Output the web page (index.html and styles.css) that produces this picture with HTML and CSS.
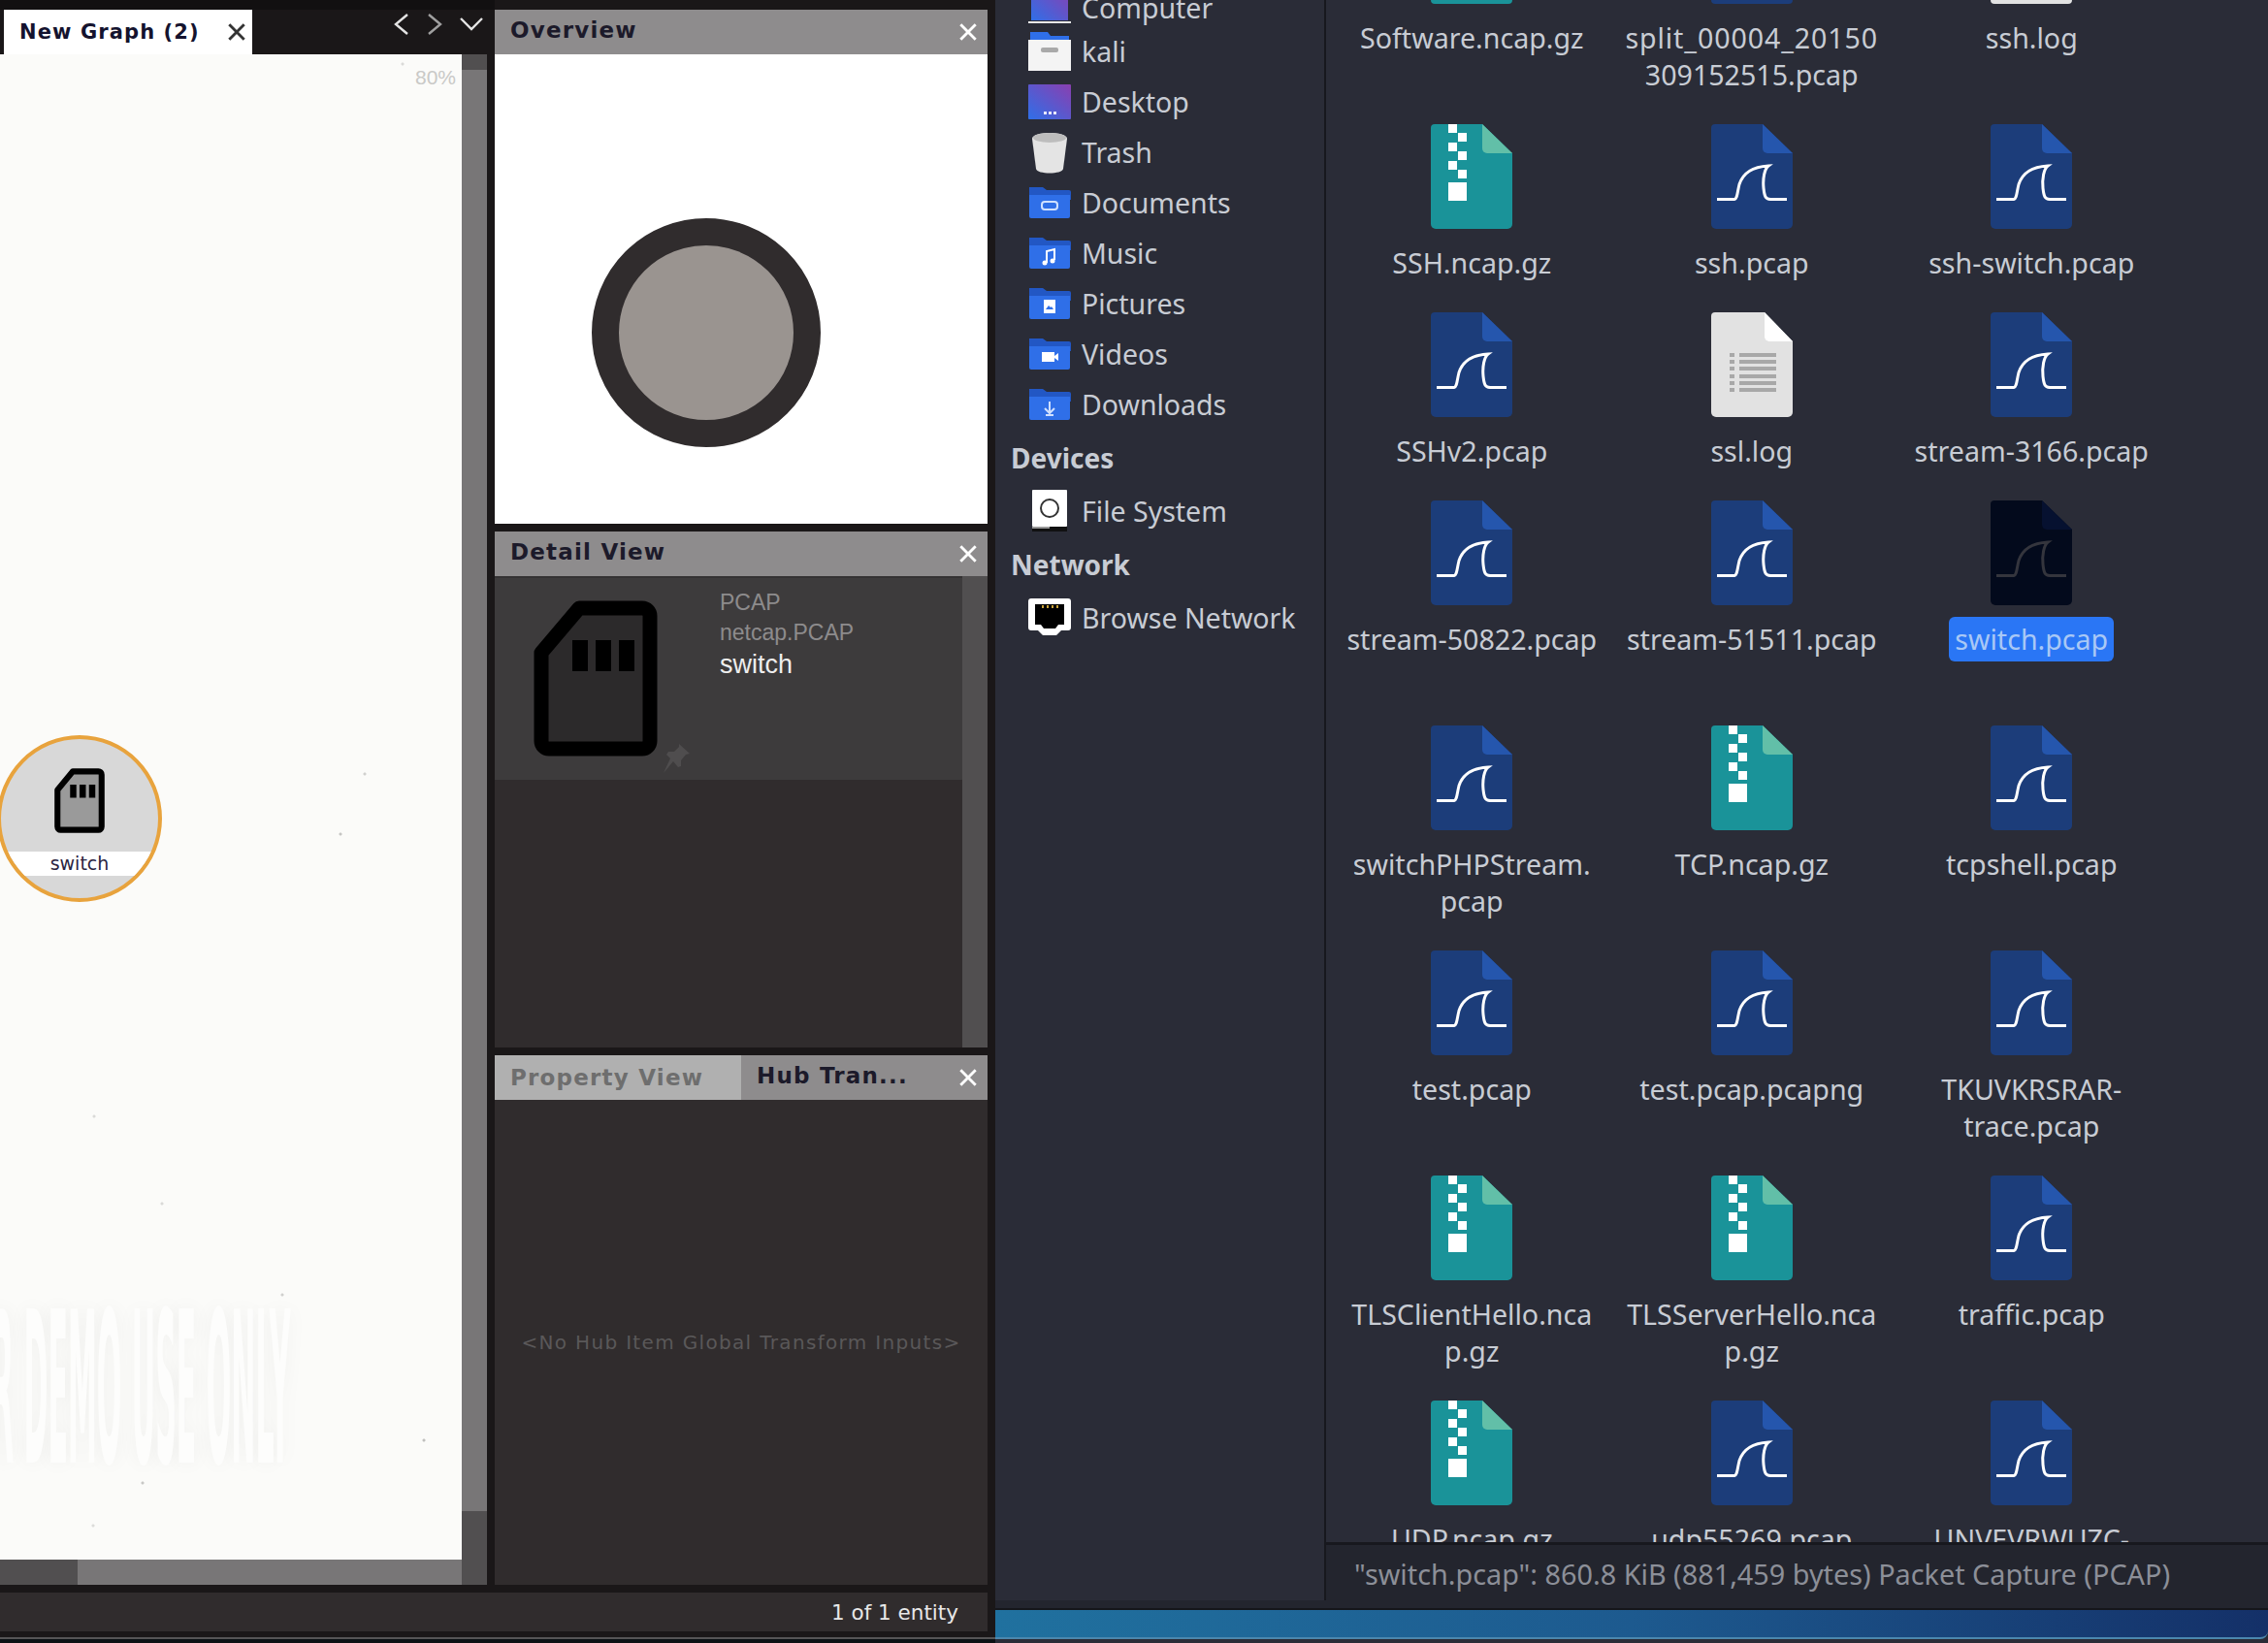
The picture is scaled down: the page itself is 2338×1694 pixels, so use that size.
FILE: index.html
```html
<!DOCTYPE html>
<html lang="en">
<head>
    <meta charset="UTF-8">
    <title>Maltego and Files</title>
    <link rel="stylesheet" href="styles.css">
</head>
<body>
    <svg class="defs" width="0" height="0">
        <symbol id="pcap" viewBox="0 0 84 108">
            <path fill="#1c3d7a" d="M4 0H53L84 30V103a5 5 0 0 1-5 5H5a5 5 0 0 1-5-5V4a4 4 0 0 1 4-4z"/>
            <path fill="#2556ad" d="M53 0L84 30H58a5 5 0 0 1-5-5z"/>
            <path fill="none" stroke="#fff" stroke-width="3" d="M6 77.5H24C27 77 27 70 29 62C33 50 42 44 59 43C55 46 53 56 54 66C55 75 56 77 61 77.5H78"/>
        </symbol>
        <symbol id="pcap-dim" viewBox="0 0 84 108">
            <path fill="#030a1c" d="M4 0H53L84 30V103a5 5 0 0 1-5 5H5a5 5 0 0 1-5-5V4a4 4 0 0 1 4-4z"/>
            <path fill="#061130" d="M53 0L84 30H58a5 5 0 0 1-5-5z"/>
            <path fill="none" stroke="#34353d" stroke-width="3" d="M6 77.5H24C27 77 27 70 29 62C33 50 42 44 59 43C55 46 53 56 54 66C55 75 56 77 61 77.5H78"/>
        </symbol>
        <symbol id="zip" viewBox="0 0 84 108">
            <path fill="#1a9399" d="M4 0H53L84 30V103a5 5 0 0 1-5 5H5a5 5 0 0 1-5-5V4a4 4 0 0 1 4-4z"/>
            <path fill="#62bfa8" d="M53 0L84 30H58a5 5 0 0 1-5-5z"/>
            <path fill="#fff" d="M18 0h9v9h-9zM28 9h9v9h-9zM18 19h9v9h-9zM28 28h9v9h-9zM18 38h9v9h-9zM28 47h9v9h-9zM18 60h19v19H18z"/>
        </symbol>
        <symbol id="text" viewBox="0 0 84 108">
            <path fill="#e2e2e2" d="M4 0H55L84 30V103a5 5 0 0 1-5 5H5a5 5 0 0 1-5-5V4a4 4 0 0 1 4-4z"/>
            <path fill="#fff" d="M55 0L84 30H60a5 5 0 0 1-5-5z"/>
            <path fill="#a8a8a8" d="M19 42h5v4h-5zM29 42h38v4H29zM19 49h5v4h-5zM29 49h38v4H29zM19 56h5v4h-5zM29 56h38v4H29zM19 64h5v4h-5zM29 64h38v4H29zM19 71h5v4h-5zM29 71h38v4H29zM19 78h5v4h-5zM29 78h38v4H29z"/>
        </symbol>
        <symbol id="card" viewBox="0 0 128 161" preserveAspectRatio="none">
            <path fill="currentColor" stroke="#000" stroke-width="15" stroke-linejoin="round" d="M47 8H112a8 8 0 0 1 8 8V145a8 8 0 0 1-8 8H16a8 8 0 0 1-8-8V54z"/>
            <path fill="#000" d="M40 41h16v32H40zM64 41h16v32H64zM88 41h16v32H88z"/>
        </symbol>
        <symbol id="folder" viewBox="0 0 44 32">
            <path fill="#2257c4" d="M1 0h14l4 3h23a2 2 0 0 1 2 2v8H1z"/>
            <path fill="#2f6fe8" d="M1 8h42v22a2 2 0 0 1-2 2H3a2 2 0 0 1-2-2z"/>
        </symbol>
        <linearGradient id="desk" x1="0" y1="1" x2="1" y2="0">
            <stop offset="0" stop-color="#2f6fe8"/>
            <stop offset="1" stop-color="#8a3fb0"/>
        </linearGradient>
    </svg>

    <div class="screen">
        <main class="graph-app">
            <section class="graph-col">
                <div class="tab-strip">
                    <div class="graph-tab">
                        <span>New Graph (2)</span>
                        <svg class="close dark" viewBox="0 0 20 20"><path d="M3 3L17 17M17 3L3 17"/></svg>
                    </div>
                    <div class="tab-nav">
                        <svg viewBox="0 0 16 24"><path d="M14 2L2 12L14 22"/></svg>
                        <svg class="dim" viewBox="0 0 16 24"><path d="M2 2L14 12L2 22"/></svg>
                        <svg class="wide" viewBox="0 0 24 14"><path d="M1 1L12 12L23 1"/></svg>
                    </div>
                </div>
                <div class="graph-body">
                    <div class="canvas">
                        <span class="zoom-level">80%</span>
                        <div class="node">
                            <svg class="node-icon"><use href="#card"/></svg>
                            <span class="node-label">switch</span>
                        </div>
                        <div class="watermark">FOR DEMO USE ONLY</div>
                    </div>
                    <div class="vbar"><div class="vthumb"></div></div>
                    <div class="hbar"><div class="hthumb"></div></div>
                    <div class="corner"></div>
                </div>
            </section>

            <aside class="side-col">
                <section class="panel panel-overview">
                    <header class="panel-head">
                        <span class="panel-title">Overview</span>
                        <svg class="close" viewBox="0 0 20 20"><path d="M3 3L17 17M17 3L3 17"/></svg>
                    </header>
                    <div class="overview-body"><div class="overview-dot"></div></div>
                </section>
                <section class="panel panel-detail">
                    <header class="panel-head">
                        <span class="panel-title">Detail View</span>
                        <svg class="close" viewBox="0 0 20 20"><path d="M3 3L17 17M17 3L3 17"/></svg>
                    </header>
                    <div class="detail-body">
                        <div class="detail-main">
                            <div class="detail-item">
                                <svg class="detail-icon"><use href="#card"/></svg>
                                <svg class="pin" viewBox="0 0 28 30"><path d="M17 0L28 10L24 11L19 17L19 23L16 24L11 18L1 30L8 15L4 11L6 8L12 8L17 3z"/></svg>
                                <div class="detail-text">
                                    <div class="detail-type">PCAP</div>
                                    <div class="detail-type">netcap.PCAP</div>
                                    <div class="detail-name">switch</div>
                                </div>
                            </div>
                        </div>
                        <div class="detail-bar"></div>
                    </div>
                </section>
                <section class="panel panel-hub">
                    <header class="panel-head">
                        <span class="panel-tab-off">Property View</span>
                        <span class="panel-tab-on">Hub Tran...</span>
                        <svg class="close" viewBox="0 0 20 20"><path d="M3 3L17 17M17 3L3 17"/></svg>
                    </header>
                    <div class="hub-body">&lt;No Hub Item Global Transform Inputs&gt;</div>
                </section>
            </aside>

            <footer class="graph-status">1 of 1 entity</footer>
            <div class="graph-bottom"></div>
        </main>

        <section class="files">
            <div class="files-top">
                <nav class="places">
                    <div class="place place-cut">
                        <svg class="place-icon" viewBox="0 0 44 40"><rect x="3" width="38" height="36" fill="url(#desk)"/><rect y="37" width="44" height="2" fill="#e8e8e8"/></svg>
                        <span>Computer</span>
                    </div>
                    <div class="place">
                        <svg class="place-icon" viewBox="0 0 44 40"><path fill="#2f6fe8" d="M2 0h18l3 4h19v8H2z"/><path fill="#f4f4f4" d="M0 8h44v32H0z"/><rect x="13" y="16" width="18" height="5" rx="2" fill="#a9a9a9"/></svg>
                        <span>kali</span>
                    </div>
                    <div class="place">
                        <svg class="place-icon" viewBox="0 0 44 36"><rect width="44" height="36" rx="1" fill="url(#desk)"/><path fill="#e8e8ff" d="M16 28h3v3h-3zM21 28h3v3h-3zM26 28h3v3h-3z"/></svg>
                        <span>Desktop</span>
                    </div>
                    <div class="place">
                        <svg class="place-icon" viewBox="0 0 44 44"><path fill="#e4e4e4" d="M4 8C4 0 40 0 40 8L36 39C35 45 9 45 8 39z"/><ellipse cx="22" cy="7" rx="17" ry="5" fill="#bdbdbd"/></svg>
                        <span>Trash</span>
                    </div>
                    <div class="place">
                        <svg class="place-icon folder-icon" viewBox="0 0 44 32"><use href="#folder" width="44" height="32"/><rect x="14" y="15" width="16" height="8" rx="3" fill="none" stroke="#cfe0ff" stroke-width="2"/></svg>
                        <span>Documents</span>
                    </div>
                    <div class="place">
                        <svg class="place-icon folder-icon" viewBox="0 0 44 32"><use href="#folder" width="44" height="32"/><path fill="none" stroke="#fff" stroke-width="2" d="M19 26V14l8-2v11"/><circle cx="17" cy="26" r="2.5" fill="#fff"/><circle cx="25" cy="24" r="2.5" fill="#fff"/></svg>
                        <span>Music</span>
                    </div>
                    <div class="place">
                        <svg class="place-icon folder-icon" viewBox="0 0 44 32"><use href="#folder" width="44" height="32"/><rect x="16" y="12" width="12" height="14" fill="#fff"/><path fill="#2f6fe8" d="M18 22l3-4 2 2 1-1 2 3z"/></svg>
                        <span>Pictures</span>
                    </div>
                    <div class="place">
                        <svg class="place-icon folder-icon" viewBox="0 0 44 32"><use href="#folder" width="44" height="32"/><rect x="14" y="14" width="13" height="10" fill="#fff"/><path fill="#fff" d="M27 18l4-3v8l-4-3z"/></svg>
                        <span>Videos</span>
                    </div>
                    <div class="place">
                        <svg class="place-icon folder-icon" viewBox="0 0 44 32"><use href="#folder" width="44" height="32"/><path fill="none" stroke="#cfe0ff" stroke-width="2" d="M22 13v11M17 20l5 5 5-5M18 27h8"/></svg>
                        <span>Downloads</span>
                    </div>
                    <div class="place-head">Devices</div>
                    <div class="place">
                        <svg class="place-icon" viewBox="0 0 44 44"><rect x="4" width="36" height="38" rx="1" fill="#fff"/><rect x="4" y="38" width="36" height="5" fill="#111"/><rect x="4" y="38" width="18" height="2" fill="#999"/><circle cx="22" cy="19" r="9" fill="none" stroke="#333" stroke-width="2"/></svg>
                        <span>File System</span>
                    </div>
                    <div class="place-head">Network</div>
                    <div class="place">
                        <svg class="place-icon" viewBox="0 0 44 40"><path fill="#fff" d="M3 0H41a3 3 0 0 1 3 3V30a3 3 0 0 1-3 3H34l-4 4a2 2 0 0 1-2 1H16a2 2 0 0 1-2-1l-4-4H3a3 3 0 0 1-3-3V3a3 3 0 0 1 3-3z"/><path fill="#000" d="M7 6H37V27H31L28 31H16L13 27H7z"/><path fill="#c9a23a" d="M14 7h2v3h-2zM19 7h2v3h-2zM24 7h2v3h-2zM29 7h2v3h-2z"/></svg>
                        <span>Browse Network</span>
                    </div>
                </nav>
                <div class="browser">
                    <div class="file-grid">
                        <div class="file file-cut"><span class="stub stub-zip"></span><span class="file-name">Software.ncap.gz</span></div>
                        <div class="file file-cut"><span class="stub stub-pcap"></span><span class="file-name"><span class="digits">split_00004_20150</span><br>309152515.pcap</span></div>
                        <div class="file file-cut"><span class="stub stub-text"></span><span class="file-name">ssh.log</span></div>

                        <div class="file"><svg class="file-icon"><use href="#zip"/></svg><span class="file-name">SSH.ncap.gz</span></div>
                        <div class="file"><svg class="file-icon"><use href="#pcap"/></svg><span class="file-name">ssh.pcap</span></div>
                        <div class="file"><svg class="file-icon"><use href="#pcap"/></svg><span class="file-name">ssh-switch.pcap</span></div>

                        <div class="file"><svg class="file-icon"><use href="#pcap"/></svg><span class="file-name">SSHv2.pcap</span></div>
                        <div class="file"><svg class="file-icon"><use href="#text"/></svg><span class="file-name">ssl.log</span></div>
                        <div class="file"><svg class="file-icon"><use href="#pcap"/></svg><span class="file-name">stream-3166.pcap</span></div>

                        <div class="file file-wrap"><svg class="file-icon"><use href="#pcap"/></svg><span class="file-name">stream-50822.pcap</span></div>
                        <div class="file file-wrap"><svg class="file-icon"><use href="#pcap"/></svg><span class="file-name">stream-51511.pcap</span></div>
                        <div class="file file-wrap"><svg class="file-icon"><use href="#pcap-dim"/></svg><span class="file-name selected">switch.pcap</span></div>

                        <div class="file file-wrap"><svg class="file-icon"><use href="#pcap"/></svg><span class="file-name">switchPHPStream.<br>pcap</span></div>
                        <div class="file file-wrap"><svg class="file-icon"><use href="#zip"/></svg><span class="file-name">TCP.ncap.gz</span></div>
                        <div class="file file-wrap"><svg class="file-icon"><use href="#pcap"/></svg><span class="file-name">tcpshell.pcap</span></div>

                        <div class="file file-wrap"><svg class="file-icon"><use href="#pcap"/></svg><span class="file-name">test.pcap</span></div>
                        <div class="file file-wrap"><svg class="file-icon"><use href="#pcap"/></svg><span class="file-name">test.pcap.pcapng</span></div>
                        <div class="file file-wrap"><svg class="file-icon"><use href="#pcap"/></svg><span class="file-name">TKUVKRSRAR-<br>trace.pcap</span></div>

                        <div class="file file-wrap"><svg class="file-icon"><use href="#zip"/></svg><span class="file-name">TLSClientHello.nca<br>p.gz</span></div>
                        <div class="file file-wrap"><svg class="file-icon"><use href="#zip"/></svg><span class="file-name">TLSServerHello.nca<br>p.gz</span></div>
                        <div class="file file-wrap"><svg class="file-icon"><use href="#pcap"/></svg><span class="file-name">traffic.pcap</span></div>

                        <div class="file"><svg class="file-icon"><use href="#zip"/></svg><span class="file-name">UDP.ncap.gz</span></div>
                        <div class="file"><svg class="file-icon"><use href="#pcap"/></svg><span class="file-name">udp55269.pcap</span></div>
                        <div class="file"><svg class="file-icon"><use href="#pcap"/></svg><span class="file-name">UNVEVRWUZC-</span></div>
                    </div>
                </div>
            </div>
            <div class="files-status">
                <div class="places-end"></div>
                <div class="status-text">"switch.pcap": 860.8 KiB (881,459 bytes) Packet Capture (PCAP)</div>
            </div>
            <div class="taskbar"></div>
        </section>
    </div>
</body>
</html>
```

FILE: styles.css
```css
* {
    box-sizing: border-box;
}
html, body {
    margin: 0;
    height: 100%;
}
body {
    overflow: hidden;
    background: #0c1114;
    font-family: "DejaVu Sans", sans-serif;
}
.defs {
    position: absolute;
}
.screen {
    display: flex;
    width: 2338px;
    height: 1694px;
}

/* graph application */
.graph-app {
    display: grid;
    grid-template-columns: 510px 516px;
    grid-template-rows: 1642px 40px 6px 6px;
    width: 1026px;
    background: #1a1718;
}
.graph-col {
    display: flex;
    flex-direction: column;
    padding-bottom: 8px;
}
.tab-strip {
    display: flex;
    height: 56px;
    padding-top: 10px;
    background: linear-gradient(#121011 10px, #1a1718 10px);
}
.graph-tab {
    display: flex;
    align-items: center;
    justify-content: space-between;
    width: 256px;
    margin-left: 4px;
    padding: 0 5px 0 16px;
    background: #ffffff;
    color: #14132e;
    font-size: 21px;
    font-weight: bold;
    letter-spacing: 1.1px;
}
.close {
    width: 22px;
    height: 22px;
    fill: none;
    stroke: #ffffff;
    stroke-width: 2.6;
}
.close.dark {
    stroke: #333333;
}
.tab-nav {
    display: flex;
    align-items: center;
    gap: 18px;
    margin-left: auto;
    padding: 0 12px 16px 0;
}
.tab-nav svg {
    width: 16px;
    height: 24px;
    fill: none;
    stroke: #e4e4e4;
    stroke-width: 2.4;
}
.tab-nav svg.dim {
    stroke: #a0a0a0;
}
.tab-nav svg.wide {
    width: 24px;
    height: 14px;
}
.graph-body {
    flex: 1;
    display: grid;
    grid-template-columns: 476px 26px;
    grid-template-rows: 1552px 26px;
}
.canvas {
    position: relative;
    overflow: hidden;
    background-color: #fbfbf9;
    background-image:
        radial-gradient(circle at 351px 804px, #c5c5c3 1px, transparent 2px),
        radial-gradient(circle at 376px 742px, #d0d0ce 1px, transparent 2px),
        radial-gradient(circle at 97px 1095px, #dadad8 1px, transparent 2px),
        radial-gradient(circle at 167px 1185px, #dadad8 1px, transparent 2px),
        radial-gradient(circle at 291px 1279px, #d0d0ce 1px, transparent 2px),
        radial-gradient(circle at 437px 1429px, #c0c0be 1px, transparent 2px),
        radial-gradient(circle at 147px 1473px, #c8c8c6 1px, transparent 2px),
        radial-gradient(circle at 96px 1517px, #dcdcda 1px, transparent 2px),
        radial-gradient(circle at 415px 10px, #dadad8 1px, transparent 2px);
}
.zoom-level {
    position: absolute;
    top: 12px;
    right: 6px;
    color: #c9c9c7;
    font-family: "Liberation Sans", sans-serif;
    font-size: 21px;
}
.node {
    position: absolute;
    left: -3px;
    top: 702px;
    width: 170px;
    height: 172px;
    border: 4px solid #e8a33d;
    border-radius: 50%;
    overflow: hidden;
    background: #d8d8d8;
    text-align: center;
}
.node-icon {
    position: absolute;
    left: 55px;
    top: 30px;
    width: 52px;
    height: 67px;
    color: #9a9a9a;
}
.node-label {
    position: absolute;
    left: 0;
    right: 0;
    top: 116px;
    height: 25px;
    background: #ffffff;
    color: #2b2440;
    font-size: 19px;
    line-height: 25px;
}
.watermark {
    position: absolute;
    left: -55px;
    top: 1270px;
    color: #fdfdfc;
    font-size: 56px;
    font-weight: bold;
    line-height: 56px;
    white-space: nowrap;
    text-shadow: 0 0 14px rgba(0, 0, 0, 0.05);
    transform: scale(0.536, 3.87);
    transform-origin: left top;
}
.vbar {
    background: #514f50;
    padding-top: 16px;
    padding-bottom: 50px;
}
.vthumb {
    height: 100%;
    background: #787677;
}
.hbar {
    background: #514f50;
    padding-left: 80px;
}
.hthumb {
    height: 100%;
    background: #787677;
}
.corner {
    background: #514f50;
}

/* right hand panels */
.side-col {
    display: flex;
    flex-direction: column;
    gap: 8px;
    padding: 10px 8px 8px 0;
}
.panel {
    display: flex;
    flex-direction: column;
}
.panel-overview {
    height: 530px;
}
.panel-detail {
    height: 532px;
}
.panel-hub {
    flex: 1;
}
.panel-head {
    display: flex;
    align-items: center;
    flex: none;
    height: 46px;
    padding-right: 9px;
    background: #8e8c8d;
    color: #1c1a2a;
    font-size: 23px;
    font-weight: bold;
    letter-spacing: 1.2px;
}
.panel-title {
    flex: 1;
    padding: 0 0 4px 16px;
}
.panel-tab-off {
    display: flex;
    align-items: center;
    width: 254px;
    height: 100%;
    padding-left: 16px;
    background: #b0b0b0;
    color: #6e6e6e;
}
.panel-tab-on {
    flex: 1;
    padding: 0 0 4px 16px;
}
.overview-body {
    flex: 1;
    display: flex;
    align-items: center;
    justify-content: center;
    padding: 90px 72px 0 0;
    background: #ffffff;
}
.overview-dot {
    width: 236px;
    height: 236px;
    border: 28px solid #302c2d;
    border-radius: 50%;
    background: #9a9490;
}
.detail-body {
    flex: 1;
    display: flex;
    background: #302c2d;
}
.detail-main {
    flex: 1;
}
.detail-bar {
    width: 26px;
    background: #514f50;
}
.detail-item {
    position: relative;
    display: flex;
    height: 210px;
    padding: 10px 0 0 232px;
    background: #3d3b3c;
    border-top: 2px solid #343233;
}
.detail-icon {
    position: absolute;
    left: 40px;
    top: 23px;
    width: 128px;
    height: 161px;
    color: #2c2a2b;
}
.pin {
    position: absolute;
    left: 173px;
    top: 171px;
    width: 28px;
    height: 30px;
    fill: #4f4d4e;
}
.detail-type {
    color: #8d8b8c;
    font-family: "Liberation Sans", sans-serif;
    font-size: 23px;
    line-height: 31px;
}
.detail-name {
    color: #eeeeee;
    font-family: "Liberation Sans", sans-serif;
    font-size: 27px;
    line-height: 34px;
}
.hub-body {
    flex: 1;
    display: flex;
    align-items: center;
    justify-content: center;
    background: #302c2d;
    color: #5a5859;
    font-size: 20px;
    letter-spacing: 1.33px;
}
.graph-status {
    grid-column: 1 / 3;
    display: flex;
    align-items: center;
    justify-content: flex-end;
    margin-right: 8px;
    padding-right: 30px;
    background: #302c2d;
    color: #e8e8e8;
    font-size: 21.5px;
}
.graph-bottom {
    grid-column: 1 / 3;
    grid-row: 4;
    border-top: 2px solid #555455;
    background: #0c1114;
}

/* file manager */
.files {
    flex: 1;
    display: flex;
    flex-direction: column;
    background: #2a2c37;
    color: #c8ccd4;
    font-family: "Noto Sans", sans-serif;
}
.files-top {
    display: flex;
    height: 1593px;
}
.places {
    width: 341px;
    flex: none;
    overflow: hidden;
    border-right: 2px solid #17181e;
    font-size: 28.5px;
}
.place {
    display: flex;
    align-items: center;
    gap: 11px;
    height: 52px;
    padding-left: 34px;
}
.place-cut {
    height: 27px;
    align-items: flex-end;
}
.place-icon {
    flex: none;
    width: 44px;
    height: 44px;
}
.folder-icon {
    height: 34px;
}
.place-head {
    display: flex;
    align-items: center;
    height: 58px;
    padding-left: 16px;
    font-size: 28px;
    font-weight: bold;
}
.browser {
    flex: 1;
    overflow: hidden;
    border-bottom: 3px solid #17181e;
}
.file-grid {
    display: grid;
    grid-template-columns: 288.5px 288.5px 288.5px;
    padding-left: 6px;
    font-size: 28.6px;
    line-height: 38px;
}
.file {
    display: flex;
    flex-direction: column;
    align-items: center;
    height: 194px;
    padding-top: 12px;
    text-align: center;
}
.file.file-wrap {
    height: 232px;
}
.file.file-cut {
    height: 116px;
    padding-top: 0;
}
.stub {
    width: 84px;
    height: 4px;
    margin-bottom: 16px;
    border-radius: 0 0 4px 4px;
}
.stub-zip {
    background: #1a9399;
}
.stub-pcap {
    background: #1c3d7a;
}
.stub-text {
    background: #e2e2e2;
}
.digits {
    letter-spacing: 0.9px;
}
.file-icon {
    flex: none;
    width: 84px;
    height: 108px;
    margin-bottom: 16px;
}
.file-name {
    padding: 0 3px;
    border-radius: 6px;
}
.selected {
    margin-top: -4px;
    padding: 4px 6px;
    background: #2a76f5;
    color: #a9c8f5;
}
.files-status {
    display: flex;
    height: 65px;
    background: #23252e;
}
.places-end {
    width: 341px;
    height: 57px;
    background: #2a2c37;
    border-right: 2px solid #17181e;
}
.status-text {
    padding: 12px 0 0 29px;
    color: #8c8f98;
    font-size: 28.8px;
    line-height: 36px;
}
.taskbar {
    height: 32px;
    border-top: 2px solid #15161b;
    border-bottom: 2px solid #4b87ad;
    border-bottom-right-radius: 8px;
    background: linear-gradient(90deg, #20719f, #1d5a8f 50%, #143068);
}
```
